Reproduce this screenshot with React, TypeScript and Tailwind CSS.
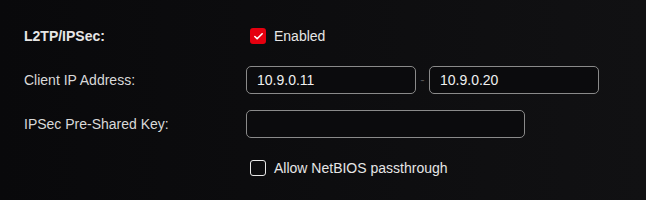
import { Check } from 'lucide-react';

function Row({ label, bold, children }: { label: string; bold?: boolean; children: React.ReactNode }) {
  return (
    <div className="flex h-[44px] items-center">
      <div
        className={
          bold
            ? 'w-[222px] shrink-0 text-[14px] font-bold text-[#e6e6e6]'
            : 'w-[222px] shrink-0 text-[14px] text-[#d9d9d9]'
        }
      >
        {label}
      </div>
      <div className="flex items-center">{children}</div>
    </div>
  );
}

function Box({ checked }: { checked?: boolean }) {
  return checked ? (
    <span className="ml-1 flex h-4 w-4 items-center justify-center rounded-[3px] bg-[#e5000f]">
      <Check size={11} strokeWidth={3.5} color="#fff" />
    </span>
  ) : (
    <span className="ml-1 h-4 w-4 rounded-[3px] border-[1.5px] border-[#e8e8e8]" />
  );
}

function Field({ value, width }: { value?: string; width: string }) {
  return (
    <div
      className={`flex h-[28px] ${width} items-center rounded-[5px] border border-[#8a8a8a] bg-[#0b0b0d] px-[10px] text-[14px] text-[#f0f0f0]`}
    >
      {value}
    </div>
  );
}

export default function App() {
  return (
    <div
      className="h-[200px] w-[646px] bg-gradient-to-r from-[#09090b] to-[#111113] pl-[24px] pt-[14px]"
      style={{ fontFamily: '"Liberation Sans", Arial, sans-serif' }}
    >
      <Row label="L2TP/IPSec:" bold>
        <Box checked />
        <span className="ml-[8px] text-[14px] text-[#e6e6e6]">Enabled</span>
      </Row>
      <Row label="Client IP Address:">
        <Field value="10.9.0.11" width="w-[170px]" />
        <span className="w-[13px] text-center text-[13px] text-[#555]">-</span>
        <Field value="10.9.0.20" width="w-[170px]" />
      </Row>
      <Row label="IPSec Pre-Shared Key:">
        <Field width="w-[279px]" />
      </Row>
      <Row label="">
        <Box />
        <span className="ml-[8px] text-[14px] text-[#e6e6e6]">Allow NetBIOS passthrough</span>
      </Row>
    </div>
  );
}
